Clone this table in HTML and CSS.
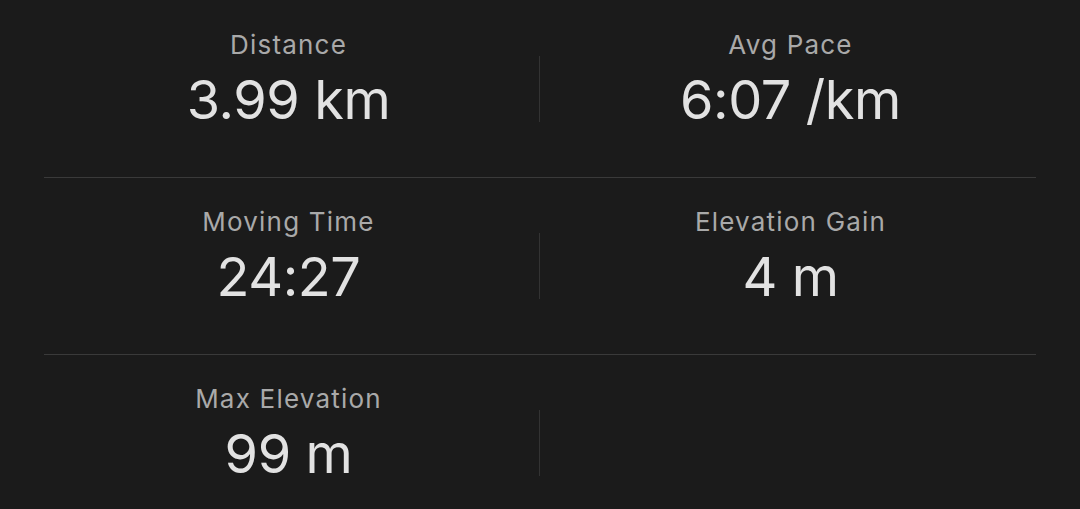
FILE: index.html
```html
<!DOCTYPE html>
<html lang="en">
<head>
  <meta charset="UTF-8" />
  <title>Activity Stats</title>
  <link rel="stylesheet" href="styles.css">
</head>
<body>
  <div class="stats">

    <div class="row">
      <div class="stat">
        <div class="label">Distance</div>
        <div class="value">3.99 km</div>
      </div>
      <div class="divider"></div>
      <div class="stat">
        <div class="label">Avg Pace</div>
        <div class="value">6:07 /km</div>
      </div>
    </div>

    <div class="row">
      <div class="stat">
        <div class="label">Moving Time</div>
        <div class="value">24:27</div>
      </div>
      <div class="divider"></div>
      <div class="stat">
        <div class="label">Elevation Gain</div>
        <div class="value">4 m</div>
      </div>
    </div>

    <div class="row">
      <div class="stat">
        <div class="label">Max Elevation</div>
        <div class="value">99 m</div>
      </div>
      <div class="divider"></div>
      <div class="stat"></div>
    </div>

  </div>
</body>
</html>
```

FILE: styles.css
```css
body {
  margin: 0;
  padding: 0;
  background-color: #1b1b1b;
  font-family: Inter, "Noto Sans", sans-serif;
}
.stats {
  margin: 0 44px;
  padding-top: 1px;
}
.row {
  display: grid;
  grid-template-columns: 495px 1px 1fr;
  height: 176px;
  border-bottom: 1px solid #3a3a3a;
}
.stat {
  text-align: center;
  padding-top: 29px;
}
.stat:first-child {
  padding-right: 6px;
}
.stat:last-child {
  padding-left: 5px;
}
.label {
  font-size: 26px;
  line-height: 30px;
  color: #a9a9a9;
  letter-spacing: 1.2px;
}
.value {
  margin-top: 10px;
  font-size: 54px;
  line-height: 60px;
  color: #e2e2e2;
  letter-spacing: -0.4px;
}
.divider {
  margin-top: 55px;
  height: 66px;
  background-color: #333;
}
```
